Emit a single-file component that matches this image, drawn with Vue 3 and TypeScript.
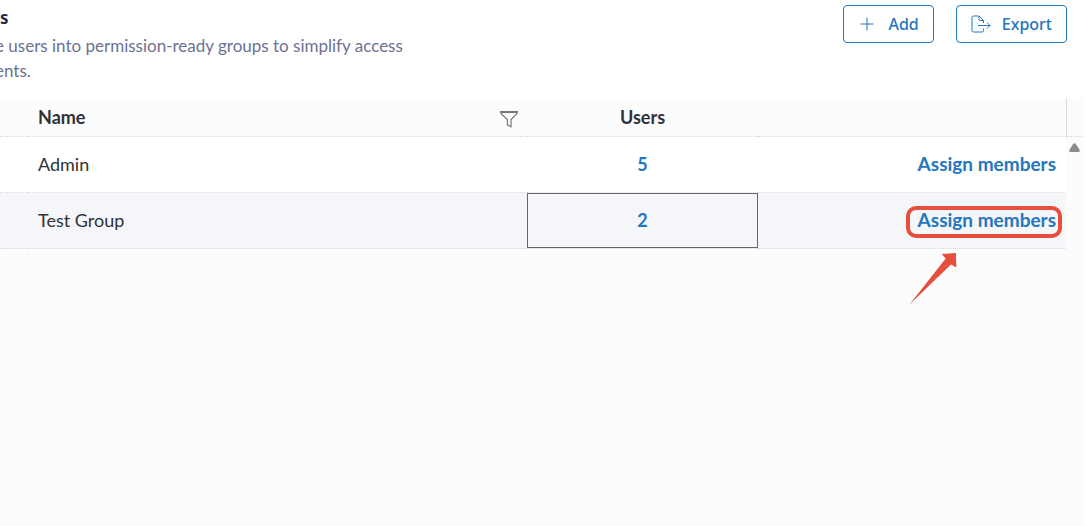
<script setup lang="ts">
interface Group {
  name: string
  users: number
  selected: boolean
}

const groups: Group[] = [
  { name: 'Admin', users: 5, selected: false },
  { name: 'Test Group', users: 2, selected: true },
]
</script>

<template>
  <main class="page">
    <header class="top">
      <div class="intro">
        <h1>s</h1>
        <p>e users into permission-ready groups to simplify access<br />ents.</p>
      </div>
      <div class="actions">
        <button type="button" class="btn">
          <svg class="plus" width="14" height="14" viewBox="0 0 14 14" aria-hidden="true">
            <path d="M7 .5v13M.5 7h13" />
          </svg>
          Add
        </button>
        <button type="button" class="btn">
          <svg width="20" height="18" viewBox="0 0 20 18" aria-hidden="true">
            <path d="M12.5 13.500v2a1.500 1.500 0 0 1-1.500 1.500H2.500A1.500 1.500 0 0 1 1 15.500v-13A1.500 1.500 0 0 1 2.500 1H8l4.500 4.500v2.500M8 1v3.500a1 1 0 0 0 1 1h3.500M7 10.500h12M16 7.500l3 3-3 3" />
          </svg>
          Export
        </button>
      </div>
    </header>

    <section class="grid">
      <table>
        <colgroup>
          <col class="c-pick" />
          <col class="c-name" />
          <col class="c-users" />
          <col />
          <col class="c-bar" />
        </colgroup>
        <thead>
          <tr>
            <th></th>
            <th class="name">
              <div class="head">
                Name
                <button type="button" class="filter" aria-label="Filter by name">
                  <svg width="20" height="18" viewBox="0 0 20 18" aria-hidden="true">
                    <path d="M1.500 1.500h17q-.2 2-1.700 3.200L12 9.500v7.300l-3.600-2V9.500L3.200 4.700Q1.700 3.500 1.500 1.500zM2 2.500h16" />
                  </svg>
                </button>
              </div>
            </th>
            <th class="users">Users</th>
            <th></th>
            <th class="bar-head"></th>
          </tr>
        </thead>
        <tbody>
          <tr v-for="(group, i) in groups" :key="group.name" :class="{ selected: group.selected }">
            <td></td>
            <td class="name">{{ group.name }}</td>
            <td class="users"><a href="#">{{ group.users }}</a></td>
            <td class="assign">
              <span class="target">
                <a href="#">Assign members</a>
                <template v-if="group.selected">
                  <span class="ring"></span>
                  <svg class="arrow" width="48" height="52" viewBox="0 0 48 52" aria-hidden="true">
                    <path d="M.5 51.500L36.700 5.500 32.700 1 47 0l.3 14.500-5.300-3z" />
                  </svg>
                </template>
              </span>
            </td>
            <td v-if="i === 0" class="bar" :rowspan="groups.length">
              <svg width="11" height="9" viewBox="0 0 11 9" aria-hidden="true">
                <path d="M4.300 .8q1.200-1.300 2.400 0L10.700 7q.6 1.700-1 2H1.300Q-.3 8.700.3 7z" />
              </svg>
            </td>
          </tr>
        </tbody>
      </table>
    </section>
  </main>
</template>

<style>
body {
  margin: 0;
  background: #fff;
}
</style>

<style scoped>
.page {
  display: flex;
  flex-direction: column;
  min-height: 100vh;
  overflow: hidden;
  font-family: Lato, "Noto Sans", sans-serif;
  color: #303238;
}
.top {
  display: flex;
  justify-content: space-between;
  align-items: flex-start;
  height: 98px;
}
.intro {
  margin: 6px 0 0 -5px;
}
h1 {
  margin: 0 0 3px 5px;
  font: 700 17px/24px "Noto Sans", sans-serif;
  color: #242a4b;
}
p {
  margin: 0;
  font-size: 17px;
  line-height: 25px;
  color: #6c7293;
}
.actions {
  display: flex;
  gap: 22px;
  padding: 5px 19px 0 0;
}
.btn {
  display: flex;
  align-items: center;
  gap: 11px;
  height: 38px;
  padding: 0 14px;
  border: 1px solid #2476bd;
  border-radius: 4px;
  background: #fff;
  color: #2476bd;
  font: 500 16px/24px "Noto Sans", sans-serif;
}
.btn svg {
  fill: none;
  stroke: #2476bd;
  stroke-width: 1;
}
.btn .plus {
  margin: 0 3px 0 2px;
}
.grid {
  flex: 1;
  margin-right: 2px;
  background: #fcfcfc;
}
table {
  width: 100%;
  table-layout: fixed;
  border-collapse: separate;
  border-spacing: 0;
}
.c-pick {
  width: 28px;
}
.c-name {
  width: 499px;
}
.c-users {
  width: 231px;
}
.c-bar {
  width: 18px;
}
th,
td {
  box-sizing: border-box;
  padding: 0 0 2px;
  border-bottom: 1px dotted #d9dade;
  font-size: 18px;
  line-height: 24px;
  text-align: left;
}
th {
  height: 39px;
  padding: 0;
  font-weight: 700;
}
td {
  height: 56px;
  background: #fff;
}
.selected td {
  background: #f5f6fa;
}
.name {
  padding-left: 10px;
}
.head {
  display: flex;
  align-items: center;
  justify-content: space-between;
}
.filter {
  display: flex;
  margin-right: 8px;
  padding: 4px 0 0;
  border: 0;
  background: none;
}
.filter svg {
  fill: none;
  stroke: #74777c;
  stroke-width: 1.2;
}
.users {
  text-align: center;
}
.selected .users {
  box-shadow: inset 0 0 0 1px #65666b;
}
a {
  color: #2476bd;
  font-weight: 700;
  text-decoration: none;
}
.assign {
  padding-right: 10px;
  font-size: 19px;
  text-align: right;
}
.target {
  position: relative;
  display: inline-block;
}
.ring {
  position: absolute;
  inset: -2px -6px -6px -12px;
  border: 4px solid #e64f3c;
  border-radius: 10px;
  pointer-events: none;
}
.arrow {
  position: absolute;
  top: 45px;
  right: 99px;
  fill: #e64f3c;
  pointer-events: none;
}
.bar-head {
  border-left: 1px solid #d9dade;
}
td.bar {
  padding: 6px 3px 0;
  border: 0;
  background: #fcfcfc;
  vertical-align: top;
}
.bar svg {
  display: block;
  fill: #8b8b8b;
}
</style>
